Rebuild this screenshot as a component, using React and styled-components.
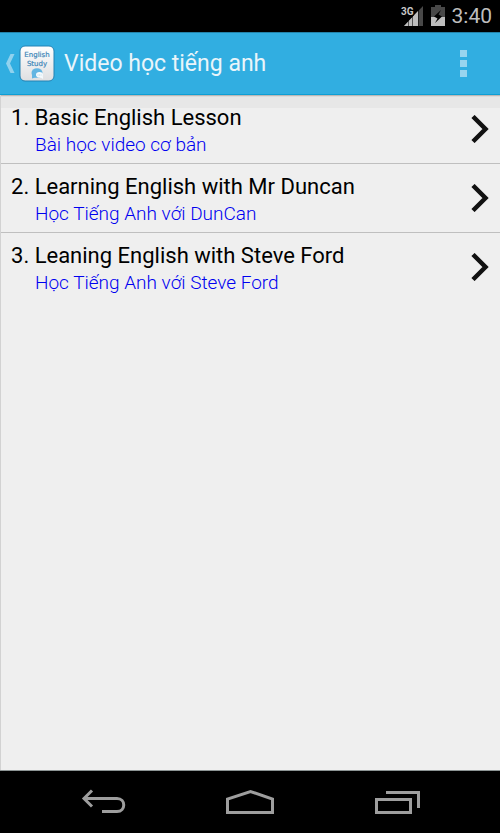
import React from 'react';
import styled, { createGlobalStyle } from 'styled-components';

const GlobalStyle = createGlobalStyle`
  * { box-sizing: border-box; }
  body { margin: 0; background: #efefef; }
  button { font: inherit; color: inherit; border: 0; padding: 0; background: none; cursor: pointer; }
  svg { display: block; flex: none; }
`;

const Screen = styled.div`
  display: flex;
  flex-direction: column;
  min-height: 100vh;
  font-family: Roboto, "Noto Sans", sans-serif;
  background: #efefef;
`;

const StatusBar = styled.div`
  display: flex;
  align-items: center;
  justify-content: flex-end;
  gap: 7px;
  height: 32px;
  padding: 0 8px;
  background: #000;
  color: #bebebe;
`;

const Clock = styled.time`
  font-size: 21px;
  line-height: 32px;
`;

const AppBar = styled.header`
  display: flex;
  align-items: center;
  height: 63px;
  padding: 0 25px 0 5px;
  background: #31aee1;
  border-top: 1px solid #2383aa;
  border-bottom: 1px solid #0d9fd5;
  color: #eaf5fa;
`;

const UpButton = styled.button`
  display: flex;
  align-items: center;
  gap: 3px;
`;

const Title = styled.h1`
  flex: 1;
  margin: 0 0 0 9px;
  font-size: 23px;
  font-weight: 400;
  line-height: 32px;
`;

const MenuButton = styled.button`
  padding: 8px;
`;

const Main = styled.main`
  flex: 1;
  border-left: 1px solid #d2d2d2;
  background: linear-gradient(#bdb9b7 0 1px, #dcdcdc 1px 2px, #e7e7e7 2px 13px, transparent 13px);
`;

const LessonList = styled.ul`
  margin: 0;
  padding: 0;
  list-style: none;
`;

const LessonItem = styled.li`
  & + & { border-top: 1px solid #bfbfbf; }
`;

const LessonButton = styled.button`
  display: flex;
  align-items: center;
  justify-content: space-between;
  width: 100%;
  height: 68px;
  padding: 0 11px 0 10px;
  text-align: left;
`;

const LessonText = styled.span`
  display: flex;
  flex-direction: column;
  padding-top: 4px;
`;

const LessonName = styled.span`
  font-size: 22px;
  line-height: 28px;
  color: #000;
`;

const LessonNote = styled.span`
  padding-left: 24px;
  font-size: 19px;
  font-weight: 300;
  line-height: 26px;
  color: #0000f0;
`;

const NavBar = styled.nav`
  display: flex;
  align-items: center;
  justify-content: center;
  gap: 98px;
  height: 63px;
  border-top: 1px solid #8c9494;
  background: #000;
`;

const NavButton = styled.button`
  display: flex;
  justify-content: center;
  width: 49px;
`;

const lessons = [
  { name: 'Basic English Lesson', note: 'Bài học video cơ bản' },
  { name: 'Learning English with Mr Duncan', note: 'Học Tiếng Anh với DunCan' },
  { name: 'Leaning English with Steve Ford', note: 'Học Tiếng Anh với Steve Ford' },
];

function SignalIcon() {
  return (
    <svg width="24" height="24" viewBox="0 0 24 24" role="img" aria-label="3G signal">
      <path d="M23 2V22H4Z" fill="#484848" />
      <path d="M18 7V22H4Z" fill="#bebebe" />
      <path d="M8.500 14V22M12.500 10V22M18.500 5V22" stroke="#000" strokeWidth="1" opacity=".55" />
      <path d="M0 0H14V11L11 14H0Z" fill="#000" />
      <text x="1" y="11" fontFamily="Roboto, sans-serif" fontSize="10" fontWeight="700" fill="#c8c8c8">3G</text>
    </svg>
  );
}

function BatteryIcon() {
  return (
    <svg width="14" height="22" viewBox="0 0 14 22" role="img" aria-label="Battery charging">
      <path d="M4 0H10V2H14V12H0V2H4Z" fill="#484848" />
      <path d="M0 12H14V21H0Z" fill="#bebebe" />
      <path d="M10 5 3 11.500 6.500 13.500 4 18 11 11.500 7.500 9.500Z" fill="#000" />
    </svg>
  );
}

function ChevronUpIcon() {
  return (
    <svg width="11" height="22" viewBox="0 0 11 22" aria-hidden="true">
      <path d="M5.500 1H9.500L5 10.500 9.500 20H5.500L1 10.500Z" fill="#90d2ee" />
    </svg>
  );
}

function AppLogo() {
  return (
    <svg width="36" height="37" viewBox="0 0 36 37" role="img" aria-label="English Study">
      <defs>
        <linearGradient id="tile" x1="0" y1="0" x2="0" y2="1">
          <stop offset="0" stopColor="#fff" />
          <stop offset="1" stopColor="#dedfe1" />
        </linearGradient>
      </defs>
      <rect x="1" y="1" width="34" height="35" rx="5" fill="url(#tile)" stroke="#2382b4" />
      <g fill="#3d86b8" stroke="#3d86b8" strokeWidth=".2" fontFamily="DejaVu Sans, sans-serif" fontSize="7" textAnchor="middle">
        <text x="18" y="12">English</text>
        <text x="18" y="21">Study</text>
      </g>
      <ellipse cx="18" cy="28" rx="5.500" ry="4.800" fill="#62b5e2" />
      <path d="M13 29 13 33.500 18 32Z" fill="#62b5e2" />
      <ellipse cx="20.500" cy="29.800" rx="3.500" ry="2.800" fill="#f4fafd" />
      <path d="M21 32 24 34V31Z" fill="#f4fafd" />
      <path d="M18.500 30H22.500" stroke="#b4d7e9" strokeDasharray="1 .6" />
    </svg>
  );
}

function OverflowIcon() {
  return (
    <svg width="7" height="27" viewBox="0 0 7 27" aria-hidden="true">
      <path d="M0 0H7V7H0ZM0 10H7V17H0ZM0 20H7V27H0Z" fill="#98d5ef" />
    </svg>
  );
}

function ArrowIcon() {
  return (
    <svg width="18" height="28" viewBox="0 0 18 28" aria-hidden="true">
      <path d="M2 1.500 14.500 14 2 26.500" fill="none" stroke="#111" strokeWidth="4.500" />
    </svg>
  );
}

function BackIcon() {
  return (
    <svg width="45" height="26" viewBox="0 0 45 26" aria-hidden="true">
      <path d="M3 9.500H36C45 9.500 45 22.500 36 22.500H21" fill="none" stroke="#9e9e9e" strokeWidth="3" />
      <path d="M11 1.500 3 9.500 11 17.500" fill="none" stroke="#9e9e9e" strokeWidth="3" />
    </svg>
  );
}

function HomeIcon() {
  return (
    <svg width="49" height="26" viewBox="0 0 49 26" aria-hidden="true">
      <path d="M1.500 23.500V10L24.500 2.500 46.500 10V23.500Z" fill="none" stroke="#9e9e9e" strokeWidth="3" />
    </svg>
  );
}

function RecentsIcon() {
  return (
    <svg width="46" height="26" viewBox="0 0 46 26" aria-hidden="true">
      <path d="M2.500 10.500H36.500V23.500H2.500ZM12 3.500H44.500V19" fill="none" stroke="#9e9e9e" strokeWidth="3" />
    </svg>
  );
}

export default function App() {
  return (
    <Screen>
      <GlobalStyle />
      <StatusBar>
        <SignalIcon />
        <BatteryIcon />
        <Clock>3:40</Clock>
      </StatusBar>
      <AppBar>
        <UpButton aria-label="Navigate up">
          <ChevronUpIcon />
          <AppLogo />
        </UpButton>
        <Title>Video học tiếng anh</Title>
        <MenuButton aria-label="More options"><OverflowIcon /></MenuButton>
      </AppBar>
      <Main>
        <LessonList>
          {lessons.map((lesson, index) => (
            <LessonItem key={lesson.name}>
              <LessonButton>
                <LessonText>
                  <LessonName>{index + 1}. {lesson.name}</LessonName>
                  <LessonNote>{lesson.note}</LessonNote>
                </LessonText>
                <ArrowIcon />
              </LessonButton>
            </LessonItem>
          ))}
        </LessonList>
      </Main>
      <NavBar>
        <NavButton aria-label="Back"><BackIcon /></NavButton>
        <NavButton aria-label="Home"><HomeIcon /></NavButton>
        <NavButton aria-label="Recent apps"><RecentsIcon /></NavButton>
      </NavBar>
    </Screen>
  );
}
